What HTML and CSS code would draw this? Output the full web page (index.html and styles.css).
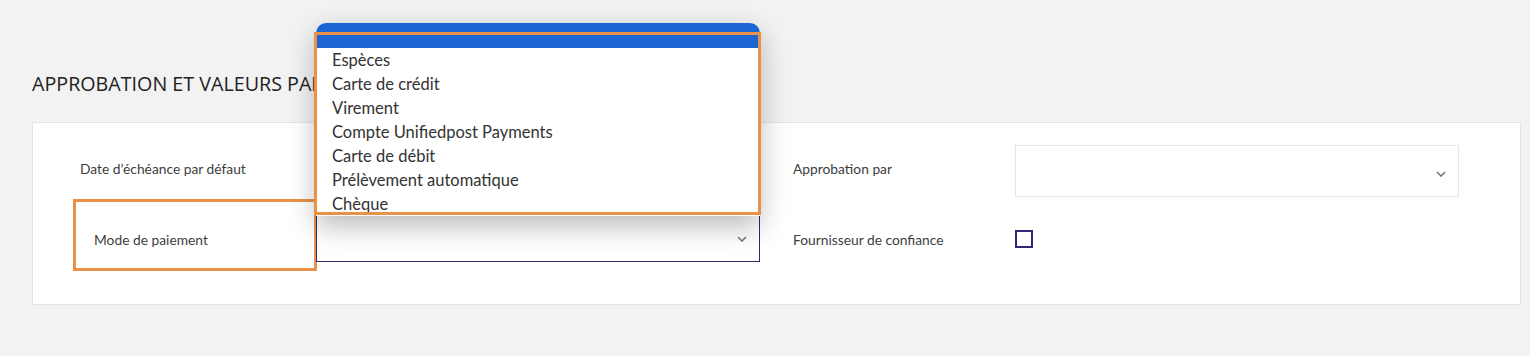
FILE: index.html
```html
<!DOCTYPE html>
<html lang="fr">
<head>
  <meta charset="UTF-8">
  <meta name="viewport" content="width=device-width, initial-scale=1.0">
  <title>Approbation et valeurs par défaut</title>
  <link rel="stylesheet" href="styles.css">
</head>
<body>
  <div class="page">
    <h1 class="section-title">Approbation et valeurs par défaut</h1>
    <div class="card">
      <div class="form-grid">
        <div class="field-label top">Date d’échéance par défaut</div>
        <div class="select">
          <svg class="chevron" width="10" height="6" viewBox="0 0 10 6"><path d="M1 1l4 4 4-4" fill="none" stroke="#777" stroke-width="1.6"/></svg>
        </div>
        <div class="field-label top right">Approbation par</div>
        <div class="select">
          <svg class="chevron" width="10" height="6" viewBox="0 0 10 6"><path d="M1 1l4 4 4-4" fill="none" stroke="#777" stroke-width="1.6"/></svg>
        </div>

        <div class="field-label indent">
          <span class="marker marker-label"></span>
          Mode de paiement
        </div>
        <div class="select focused">
          <svg class="chevron" width="10" height="6" viewBox="0 0 10 6"><path d="M1 1l4 4 4-4" fill="none" stroke="#777" stroke-width="1.6"/></svg>
          <ul class="dropdown">
            <li class="option selected"></li>
            <li class="option">Espèces</li>
            <li class="option">Carte de crédit</li>
            <li class="option">Virement</li>
            <li class="option">Compte Unifiedpost Payments</li>
            <li class="option">Carte de débit</li>
            <li class="option">Prélèvement automatique</li>
            <li class="option">Chèque</li>
            <li class="marker marker-list"></li>
          </ul>
        </div>
        <div class="field-label bottom right">Fournisseur de confiance</div>
        <div class="check-cell">
          <span class="checkbox"></span>
        </div>
      </div>
    </div>
  </div>
</body>
</html>
```

FILE: styles.css
```css
body {
  margin: 0;
  background-color: #f2f2f2;
  font-family: Lato, "Open Sans", sans-serif;
  color: #333;
}

.page {
  padding: 0 9px 0 32px;
}

.section-title {
  margin: 0 0 26px;
  padding-top: 72px;
  font-family: "Open Sans", sans-serif;
  font-size: 19.7px;
  font-weight: 400;
  line-height: 24px;
  text-transform: uppercase;
  color: #222;
}

.card {
  background-color: #ffffff;
  border: 1px solid #e3e3e3;
  padding: 22px 0 42px 47px;
}

.form-grid {
  display: grid;
  grid-template-columns: 236px 444px 255px 444px;
  row-gap: 13px;
  align-items: center;
}

.field-label {
  font-family: Lato, sans-serif;
  font-size: 13.8px;
  color: #3d3d3d;
}

.field-label.top {
  padding-bottom: 5px;
}

.field-label.bottom {
  padding-top: 6px;
}

.field-label.right {
  padding-left: 33px;
}

.field-label.indent {
  position: relative;
  align-self: stretch;
  display: flex;
  align-items: center;
  padding-left: 14px;
  padding-top: 7px;
}

.select {
  position: relative;
  height: 50px;
  border: 1px solid #e6e6e6;
  background-color: #ffffff;
}

.select.focused {
  border-color: #2b2a6e;
}

.chevron {
  position: absolute;
  right: 12px;
  top: 25px;
}

.check-cell {
  display: flex;
  align-items: center;
  padding-top: 5px;
}

.checkbox {
  width: 14px;
  height: 14px;
  border: 2px solid #2f2a78;
  background-color: #ffffff;
}

.dropdown {
  position: absolute;
  left: -1px;
  right: -1px;
  bottom: calc(100% - 5px);
  margin: 0;
  padding: 0;
  list-style: none;
  background-color: #ffffff;
  border-radius: 10px 10px 0 0;
  box-shadow: 0 10px 28px rgba(0, 0, 0, 0.28);
}

.option {
  height: 24px;
  padding-left: 16px;
  font-family: Lato, sans-serif;
  font-size: 16.5px;
  line-height: 24px;
  color: #333;
}

.option.selected {
  height: 25px;
  background-color: #1b66d2;
  border-radius: 10px 10px 0 0;
}

.marker {
  position: absolute;
  border: 3px solid #ea9148;
  pointer-events: none;
}

.marker-list {
  top: 9px;
  left: -2px;
  right: -1px;
  bottom: 1px;
}

.marker-label {
  top: -11px;
  bottom: -9px;
  left: -7px;
  right: -1px;
}
```
